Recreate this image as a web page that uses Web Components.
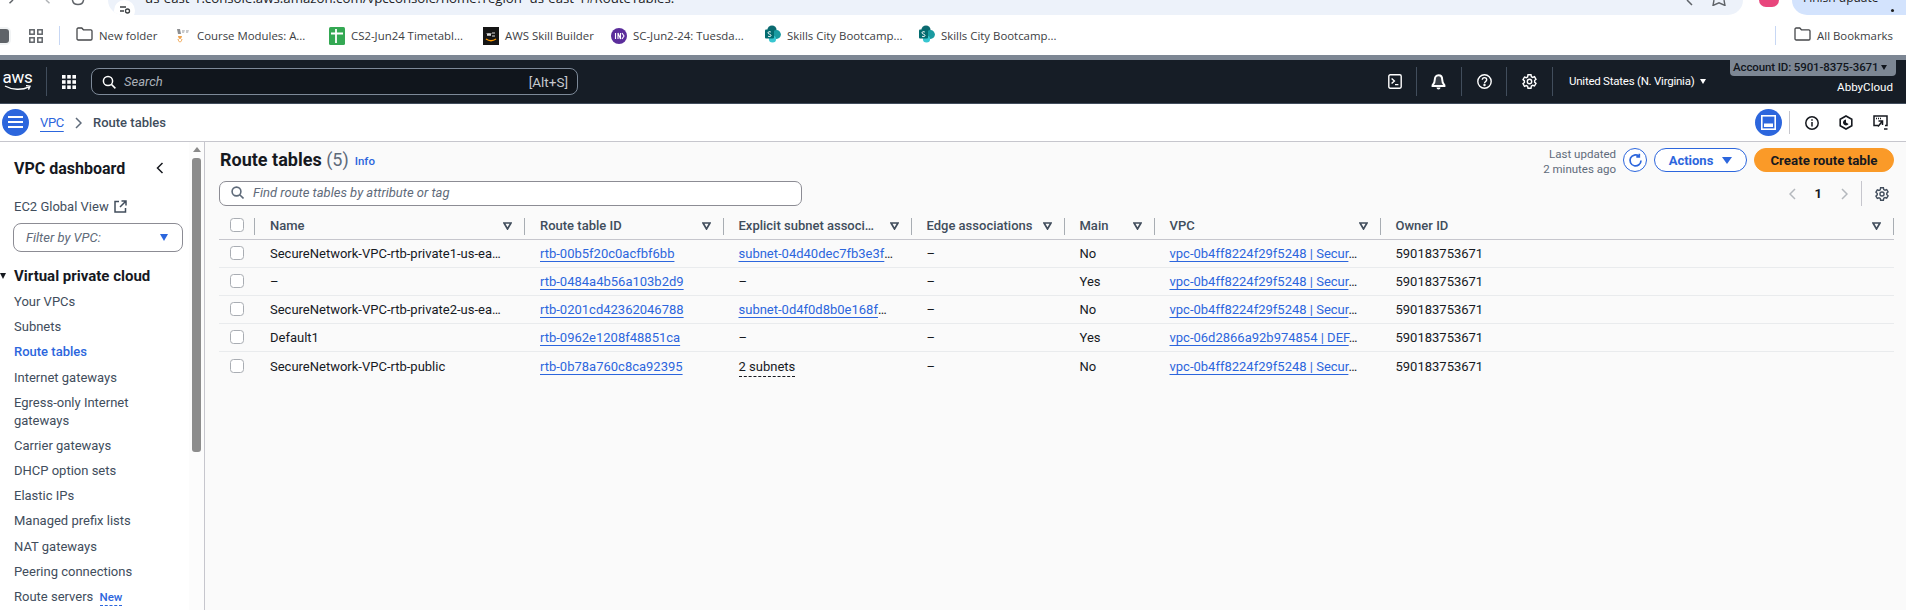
<!DOCTYPE html>
<html lang="en"><head><meta charset="utf-8"><title>Route tables</title>
<style>
html,body{margin:0;padding:0;height:610px;overflow:hidden;background:#fff}
body{font-family:Roboto,"Noto Sans",sans-serif;font-size:13px;color:#16191f;--link:#2c66dd;--cols:36px 270px 198.5px 188px 153px 90px 226px 1fr}
</style></head><body>
<browser-top></browser-top>
<aws-header></aws-header>
<crumb-bar></crumb-bar>
<console-body>
  <side-nav slot="nav"></side-nav>
  <route-panel slot="main"></route-panel>
</console-body>
<script>
function def(name,html,extra){
  const tpl=document.createElement('template');tpl.innerHTML=html;
  customElements.define(name,class extends HTMLElement{
    constructor(){super();this.attachShadow({mode:'open'}).appendChild(tpl.content.cloneNode(true));}
    connectedCallback(){extra&&extra(this)}
  });
}
const folder='<svg width="17" height="14" viewBox="0 0 17 14" fill="none" stroke="#45474a" stroke-width="1.3"><path d="M1 2.2c0-.7.5-1.2 1.2-1.2h3.6l1.6 1.8h7.4c.7 0 1.2.5 1.2 1.2v7.8c0 .7-.5 1.2-1.2 1.2H2.2c-.7 0-1.2-.5-1.2-1.2z"/></svg>';
const sp='<svg width="16" height="18" viewBox="0 0 16 18"><circle cx="7" cy="5" r="4.6" fill="#0b6a70"/><circle cx="11.5" cy="9.5" r="4.4" fill="#1a9ba1"/><circle cx="7.5" cy="14" r="3.6" fill="#37c6d0"/><rect x="0" y="4.5" width="9" height="9" rx="1" fill="#036c70"/><path d="M3 11.2c1 .6 3 .6 3-.8 0-1.4-3-1-3-2.6 0-1.3 1.8-1.3 2.8-.8" fill="none" stroke="#fff" stroke-width="1"/></svg>';

def('book-mark',`<style>:host{display:flex;align-items:center;gap:6px;font:11.4px/16px "Open Sans",sans-serif;color:#3c4043;white-space:nowrap;flex:none}::slotted(*){display:block}</style><slot name="i"></slot><slot></slot>`);

def('browser-top',`<style>
:host{display:block;height:55px;background:#fff;overflow:hidden;font-family:"Open Sans",sans-serif}
.tools{height:15px;display:flex;align-items:flex-start;position:relative}
.nav{width:108px;flex:none;display:flex;padding-left:6px;box-sizing:border-box;align-items:flex-start}
.nav svg{display:block;flex:none}
.addr{width:1635px;flex:none;height:15px;background:#edf2fa;border-radius:0 0 16px 16px;display:flex;align-items:flex-end;overflow:hidden;box-sizing:border-box;padding:0 16px 0 6px}
.lock{width:21px;height:21px;border-radius:50%;background:#fff;flex:none;margin-right:10px;display:flex;align-items:center;justify-content:center;transform:translateY(6px)}
.url{font-size:13.25px;line-height:16px;color:#202124;padding-bottom:9px;white-space:nowrap;flex:1}
.end{display:flex;gap:15px;align-self:flex-start}
.end svg{display:block}
.pink{width:20px;height:7px;border-radius:0 0 10px 10px;background:#e8467c;margin-left:16px;flex:none}
.pill{margin-left:13px;flex:1;height:15px;border-radius:0 0 0 16px;background:#d3e3fd;font-size:12px;line-height:16px;display:flex;align-items:flex-end;padding-left:11px;overflow:hidden;color:#1f1f1f;white-space:nowrap}
.pill span{padding-bottom:9px}
.dots{width:3px;height:3px;border-radius:50%;background:#1f1f1f;margin:0 0 3px 12px;flex:none}
.bar{height:39px;margin-top:1px;display:flex;align-items:center;border-bottom:1px solid #d9dcdf}
.sq{width:9px;height:14px;background:#5f6368;border-radius:0 3px 3px 0;box-shadow:0 0 0 2px #f1f3f4;flex:none}
.apps{margin-left:20px;flex:none;display:block}
.sep{width:1px;height:19px;background:#c7d7f4;margin-left:16px;flex:none}
.marks{display:flex;flex:1;align-items:center;padding-left:16px}
.sep2{margin-left:0}
.last{margin-left:18px;margin-right:13px}
</style>
<div class="tools">
 <div class="nav">
  <svg width="12" height="6" viewBox="0 0 12 6" fill="none" stroke="#5f6368" stroke-width="1.5"><path d="M7 0 3.5 3.2"/></svg>
  <svg style="margin-left:24px" width="12" height="6" viewBox="0 0 12 6" fill="none" stroke="#b0b3b6" stroke-width="1.5"><path d="M4 0l3.5 3.2"/></svg>
  <svg style="margin-left:17px" width="14" height="6" viewBox="0 0 14 6" fill="none" stroke="#5f6368" stroke-width="1.5"><path d="M1.4 0c.6 2.8 2.8 4.6 5.6 4.6S12 2.8 12.6 0"/></svg>
 </div>
 <div class="addr">
  <div class="lock"><svg width="12" height="10" viewBox="0 0 12 10" fill="none" stroke="#3c4043" stroke-width="1.3"><path d="M1 1h6M1 5h4"/><circle cx="8.5" cy="5" r="2"/></svg></div>
  <div class="url">us-east-1.console.aws.amazon.com/vpcconsole/home?region=us-east-1#RouteTables:</div>
  <div class="end">
   <svg width="14" height="6" viewBox="0 0 14 6" fill="none" stroke="#5f6368" stroke-width="1.5"><path d="M5 0 10 5"/></svg>
   <svg width="16" height="6" viewBox="0 0 16 6" fill="none" stroke="#5f6368" stroke-width="1.4"><path d="M3 0 L2 5.5 L8 2.8 L14 5.5 L13 0"/></svg>
  </div>
 </div>
 <div class="pink"></div>
 <div class="pill"><span>Finish update</span><i class="dots"></i></div>
</div>
<div class="bar">
 <div class="sq"></div>
 <svg class="apps" width="14" height="14" viewBox="0 0 14 14" fill="none" stroke="#5f6368" stroke-width="1.5"><rect x=".8" y=".8" width="4.4" height="4.4"/><rect x="8.8" y=".8" width="4.4" height="4.4"/><rect x=".8" y="8.8" width="4.4" height="4.4"/><rect x="8.8" y="8.8" width="4.4" height="4.4"/></svg>
 <div class="sep"></div>
 <div class="marks">
  <book-mark style="width:99px"><span slot="i">${folder}</span>New folder</book-mark>
  <book-mark style="width:154px"><svg slot="i" width="16" height="16" viewBox="0 0 16 16"><path d="M2 1h3l1 5H3z" fill="#8d8f92"/><path d="M7 2h3l-1 3H7zM11 2h3l-1 3h-2z" fill="#c9cacc"/><path d="M3 8c.5 4 3.5 4 4 0z" fill="#f0a24a"/><path d="M3 11c1 4 3 4 4 0" fill="none" stroke="#f0a24a"/></svg>Course Modules: A...</book-mark>
  <book-mark style="width:154px"><svg slot="i" width="16" height="18" viewBox="0 0 16 18"><rect width="16" height="18" rx="1.5" fill="#34a853"/><path d="M2 6.500h12M7 2v14" stroke="#fff" stroke-width="1.800"/></svg>CS2-Jun24 Timetabl...</book-mark>
  <book-mark style="width:128px"><svg slot="i" width="16" height="18" viewBox="0 0 16 18"><rect width="16" height="18" fill="#151515"/><path d="M4 6l1 3 1-3 1 3 1-3M9 6h3M9 9h3" stroke="#ddd" fill="none"/><path d="M3 12c3 2 7 2 10 0" stroke="#f90" fill="none" stroke-width="1.5"/></svg>AWS Skill Builder</book-mark>
  <book-mark style="width:154px"><svg slot="i" width="16" height="16" viewBox="0 0 16 16"><circle cx="8" cy="8" r="8" fill="#5b2d9b"/><path d="M4.5 5v6M7 11V5l2.5 6V5M11 5l2 3-2 3" stroke="#fff" fill="none" stroke-width="1.1"/></svg>SC-Jun2-24: Tuesda...</book-mark>
  <book-mark style="width:154px"><span slot="i">${sp}</span>Skills City Bootcamp...</book-mark>
  <book-mark><span slot="i">${sp}</span>Skills City Bootcamp...</book-mark>
 </div>
 <div class="sep sep2"></div>
 <book-mark class="last"><span slot="i">${folder}</span>All Bookmarks</book-mark>
</div>`);

const vline='<i class="v"></i>';
def('aws-header',`<style>
:host{display:block;height:49px;box-sizing:border-box;background:#161d26;border-top:5px solid #7d8794;border-bottom:1px solid #414d5c;position:relative;color:#fff}
.row{height:43px;display:flex;align-items:center}
.logo{margin-left:3px;width:29px;flex:none;height:29px;display:flex;flex-direction:column;align-items:center}
.logo span{font:400 17px/17px Roboto,sans-serif;letter-spacing:-.2px;margin-top:2px}
.logo svg{display:block;margin-top:-1px}
.v{display:block;width:1px;height:29px;background:#414d5c;flex:none}
.search{margin-left:15px;width:487px;height:27px;box-sizing:border-box;border:1px solid #7d8998;border-radius:8px;background:#10151c;display:flex;align-items:center;padding:0 9px 0 10px;color:#c6c9ce;font-size:13.5px;flex:none}
.search em{margin-left:8px;flex:1;color:#aab0b8;font-size:13px}
.ico{flex:none;display:block}
.region{font-size:11.5px;letter-spacing:-.24px;margin-left:16px;display:flex;align-items:center;gap:6px;white-space:nowrap;margin-top:-1px}
.region i{width:0;height:0;border:3.5px solid transparent;border-top:5px solid #fff;border-bottom:0}
.acct{position:absolute;right:10px;top:-1px;height:17px;width:166px;box-sizing:border-box;background:#7d8794;border-radius:0 0 4px 4px;color:#10151c;font-size:11.5px;letter-spacing:-.12px;font-weight:500;line-height:17px;padding-left:3px;display:flex;align-items:center;gap:3px;white-space:nowrap}
.acct i{width:0;height:0;border:3.5px solid transparent;border-top:5px solid #10151c;border-bottom:0}
.user{position:absolute;right:13px;top:18px;font-size:11.6px;line-height:18px}
</style>
<div class="row">
 <div class="logo"><span>aws</span><svg width="28" height="6" viewBox="0 0 28 6" fill="none" stroke="#fff" stroke-width="1.4"><path d="M1 1c7 4 17 4.4 24 .8M22 .6l4 .6-1.6 3.4"/></svg></div>
 <span style="width:14px;flex:none"></span>${vline}
 <svg class="ico" style="margin-left:15px" width="14" height="14" viewBox="0 0 14 14" fill="#fff"><rect width="3.6" height="3.6"/><rect x="5.2" width="3.6" height="3.6"/><rect x="10.4" width="3.6" height="3.6"/><rect y="5.2" width="3.6" height="3.6"/><rect x="5.2" y="5.2" width="3.6" height="3.6"/><rect x="10.4" y="5.2" width="3.6" height="3.6"/><rect y="10.4" width="3.6" height="3.6"/><rect x="5.2" y="10.4" width="3.6" height="3.6"/><rect x="10.4" y="10.4" width="3.6" height="3.6"/></svg>
 <div class="search">
  <svg class="ico" width="14" height="14" viewBox="0 0 14 14" fill="none" stroke="#fff" stroke-width="1.5"><circle cx="6" cy="6" r="4.6"/><path d="M9.4 9.4 13.4 13.4"/></svg>
  <em>Search</em><span>[Alt+S]</span>
 </div>
 <span style="width:810px;flex:none"></span>
 <svg class="ico" width="14" height="15" viewBox="0 0 14 15" fill="none" stroke="#fff" stroke-width="1.4"><rect x=".8" y=".8" width="12.4" height="13.4" rx="1.4"/><path d="M3.6 4.4 6.4 7 3.6 9.6M7 10.6h3.4"/></svg>
 <span style="width:14px;flex:none"></span>${vline}
 <svg class="ico" style="margin-left:14px" width="15" height="16" viewBox="0 0 15 16" fill="#fff"><path d="M7.5 1.200c-2.500 0-3.700 2-3.700 4.400 0 3-1.100 4.600-2.200 5.600v.8h11.800v-.8c-1.100-1-2.200-2.600-2.200-5.600 0-2.400-1.200-4.400-3.700-4.400z" fill="#fff" fill-opacity=".15" stroke="#fff" stroke-width="2"/><path d="M5.500 13.500a2 2 0 0 0 4 0z"/></svg>
 <span style="width:15px;flex:none"></span>${vline}
 <svg class="ico" style="margin-left:15px" width="15" height="15" viewBox="0 0 15 15" fill="none" stroke="#fff" stroke-width="1.400"><circle cx="7.500" cy="7.500" r="6.700"/><path d="M5.300 5.800c0-2.900 4.400-2.900 4.400-.1 0 1.700-2.200 1.800-2.200 3.500"/><circle cx="7.500" cy="11" r=".5" fill="#fff"/></svg>
 <span style="width:14px;flex:none"></span>${vline}
 <svg class="ico" style="margin-left:15px" width="15" height="15" viewBox="0 0 15 15" fill="none" stroke="#fff" stroke-width="1.400"><path d="M6 .8h3l.4 1.900 1.300.7 1.800-.7 1.500 2.600-1.400 1.300v1.500l1.400 1.300-1.500 2.600-1.800-.7-1.300.7L9 14.200H6l-.4-1.900-1.300-.7-1.800.7L1 9.700l1.400-1.300V6.900L1 5.600l1.500-2.600 1.800.7 1.300-.7z"/><circle cx="7.500" cy="7.500" r="2.200"/></svg>
 <span style="width:15px;flex:none"></span>${vline}
 <div class="region">United States (N. Virginia)<i></i></div>
</div>
<div class="acct">Account ID: 5901-8375-3671<i></i></div>
<div class="user">AbbyCloud</div>`);

def('crumb-bar',`<style>
:host{display:block;height:38px;box-sizing:border-box;border-bottom:1px solid #c6c6cd;background:#fff;color:#414d5c}
.row{height:37px;display:flex;align-items:center;padding-left:2px;padding-right:18px}
.circ{width:27px;height:27px;border-radius:50%;background:#2c66dd;display:flex;align-items:center;justify-content:center;flex:none;margin-top:-1px}
.link{margin-left:11px;width:23px;color:#2c66dd;text-decoration:underline;text-underline-offset:4px;font-size:13px;letter-spacing:-.4px}
.chev{margin-left:12px;display:block}
b{margin-left:11px;font-weight:500;font-size:13px}
.sp{flex:1}
.v{width:1px;height:23px;background:#c6c6cd;margin:0 15px 0 7px;flex:none}
svg{flex:none;display:block}
</style>
<div class="row">
 <div class="circ"><svg width="15" height="12" viewBox="0 0 15 12" stroke="#fff" stroke-width="1.800"><path d="M0 1h15M0 6h15M0 11h15"/></svg></div>
 <span class="link">VPC</span>
 <svg class="chev" width="7" height="12" viewBox="0 0 7 12" fill="none" stroke="#5f6b7a" stroke-width="1.500"><path d="M1 1l5 5-5 5"/></svg>
 <b>Route tables</b>
 <span class="sp"></span>
 <div class="circ"><svg width="15" height="15" viewBox="0 0 15 15" fill="none" stroke="#fff" stroke-width="1.600"><rect x=".8" y=".8" width="13.400" height="13.400"/><rect x="3" y="8.500" width="9" height="3.500" fill="#fff" stroke="none"/></svg></div>
 <i class="v"></i>
 <svg width="14" height="14" viewBox="0 0 14 14" fill="none" stroke="#16191f" stroke-width="1.500"><circle cx="7" cy="7" r="6.200"/><path d="M7 6v4.500M7 3.200v1.600"/></svg>
 <svg style="margin-left:20px" width="14" height="15" viewBox="0 0 14 15" fill="none" stroke="#16191f" stroke-width="1.600"><path d="M7 1l5.800 3.300v6.400L7 14l-5.800-3.300V4.300z"/><path d="M7 4.500a3 3 0 1 0 2.600 4.500L7 7.500z" fill="#16191f" stroke="none"/></svg>
 <svg style="margin-left:20px" width="15" height="15" viewBox="0 0 15 15" fill="none" stroke="#16191f" stroke-width="1.500"><path d="M5 10.500H1V1h13v9.500h-2"/><path d="M3 3.500h1M5 3.500h1M7 3.500h1" /><path d="M5.500 6h4v4M9.500 6l-4.500 5.500" /><path d="M11 14h3.500" /></svg>
</div>`);

def('console-body',`<style>:host{display:flex;height:468px;overflow:hidden;background:#fff}
.n{width:189px;flex:none;overflow:hidden}
.sb{width:15px;flex:none;background:#fcfcfc;display:flex;flex-direction:column;align-items:center;padding-top:5px;box-sizing:border-box}
.up{width:0;height:0;border:4.500px solid transparent;border-bottom:5.500px solid #8a8a8a;border-top:0}
.th{width:9px;height:294px;border-radius:3px;background:#8c8c8c;margin-top:6px;margin-left:-1px}
.m{flex:1;min-width:0;border-left:1px solid #c6c6cd;background:#fafafa}
</style><div class="n"><slot name="nav"></slot></div><div class="sb"><i class="up"></i><i class="th"></i></div><div class="m"><slot name="main"></slot></div>`);

def('nav-item',`<style>:host{display:block;font-size:13px;line-height:18px;color:#414d5c;padding:3.500px 0;width:150px}
:host([active]){color:#2c66dd;font-weight:500}
</style><slot></slot>`);

def('side-nav',`<style>
:host{display:block;padding:16px 0 0 14px;box-sizing:border-box;height:468px;color:#16191f}
.head{display:flex;align-items:center;justify-content:space-between;width:152px;height:20px}
.head b{font-size:16px;font-weight:700}
.ec2{margin-top:19px;display:flex;align-items:center;gap:5px;color:#414d5c;height:18px}
.filter{margin-top:8px;margin-left:-1px;width:170px;height:29px;box-sizing:border-box;border:1px solid #8c8c94;border-radius:8px;display:flex;align-items:center;justify-content:space-between;padding:0 14px 0 12px;font-style:italic;color:#5f6b7a;background:#fff}
.filter i{width:0;height:0;border:4.500px solid transparent;border-top:7px solid #2c66dd;border-bottom:0}
.sec{margin-top:14px;height:20px;display:flex;align-items:center;font-size:15px;font-weight:700;position:relative}
.tri{position:absolute;left:-14px;top:7px;width:0;height:0;border:3.500px solid transparent;border-top:6px solid #16191f;border-bottom:0}
.list{margin-top:3px}
.new{color:#2c66dd;font-size:11.500px;font-weight:500;margin-left:3px;border-bottom:1px dashed #2c66dd;padding-bottom:1px}
nav-item.gap{margin-top:1px}
</style>
<div class="head"><b>VPC dashboard</b><svg width="8" height="12" viewBox="0 0 8 12" fill="none" stroke="#16191f" stroke-width="1.500" style="margin-right:2px"><path d="M6.500 1l-5 5 5 5"/></svg></div>
<div class="ec2">EC2 Global View <svg width="13" height="13" viewBox="0 0 13 13" fill="none" stroke="#414d5c" stroke-width="1.500"><path d="M5 1.500H1v10.500h10.500V8M7.500 1h4.500v4.500M12 1 6 7"/></svg></div>
<div class="filter"><span>Filter by VPC:</span><i></i></div>
<div class="sec"><i class="tri"></i>Virtual private cloud</div>
<div class="list">
 <nav-item>Your VPCs</nav-item><nav-item>Subnets</nav-item><nav-item active>Route tables</nav-item>
 <nav-item class="gap">Internet gateways</nav-item><nav-item>Egress-only Internet gateways</nav-item><nav-item>Carrier gateways</nav-item><nav-item>DHCP option sets</nav-item><nav-item>Elastic IPs</nav-item><nav-item>Managed prefix lists</nav-item><nav-item class="gap">NAT gateways</nav-item><nav-item>Peering connections</nav-item><nav-item>Route servers <span class="new">New</span></nav-item>
</div>`);

def('rt-link',`<style>:host{color:var(--link);text-decoration:underline;text-underline-offset:3px}</style><slot></slot>`);
def('rt-check',`<style>:host{display:block;width:14px;height:14px;box-sizing:border-box;border:1.500px solid #a9adb3;border-radius:3.500px;background:#fff;margin-left:11px}</style>`);
def('rt-head',`<style>:host{display:flex;align-items:center;height:17px;position:relative;font-weight:500;color:#414d5c;padding:0 13px 0 15px;white-space:nowrap;box-sizing:border-box}
:host::after{content:"";position:absolute;right:0;top:1px;height:17px;width:1px;background:#a8adb3}
span{flex:1}svg{display:block;flex:none}
</style><span><slot></slot></span><svg width="9" height="8" viewBox="0 0 9 8" fill="none" stroke="#414d5c" stroke-width="1.700"><path d="M1 1h7L4.500 7z"/></svg>`);
def('rt-chk',`<style>:host{display:flex;align-items:center;height:18px;position:relative;box-sizing:border-box;margin-top:-1px}
:host(.h)::after{content:"";position:absolute;right:0;top:2px;height:17px;width:1px;background:#a8adb3}</style><rt-check></rt-check>`);
def('rt-row',`<style>:host{display:grid;grid-template-columns:var(--cols);height:28px;box-sizing:border-box;border-bottom:1px solid #e9ebed;align-items:center;white-space:nowrap}
:host(.hd){height:23px;border-bottom:1px solid #c6c6cd;align-items:start}
</style><slot></slot>`);
def('rt-cell',`<style>:host{display:block;padding-left:15px;color:#16191f}</style><slot></slot>`);
def('rt-action',`<style>:host{display:flex;align-items:center;justify-content:center;height:24px;box-sizing:border-box;border-radius:13px;border:1.500px solid #2c66dd;color:#2c66dd;font-weight:700;background:#fff;white-space:nowrap;gap:9px;font-size:13px}
:host(.p){background:#fa9a28;border-color:#fa9a28;color:#16191f;font-size:13.300px}
</style><slot></slot>`);

def('route-panel',`<style>
:host{display:block;padding:6px 12px 0 14px;height:468px;box-sizing:border-box;background:#fafafa}
.top{display:flex;align-items:flex-start;height:24px}
h1{font-size:18px;line-height:24px;font-weight:700;margin:0 0 0 1px;color:#16191f;white-space:nowrap}
h1 span{font-weight:400;color:#5f6b7a}
.info{font-size:11.500px;font-weight:500;color:#2c66dd;margin-left:6px;line-height:24px;margin-top:1px}
.sp{flex:1}
.upd{font-size:11.500px;line-height:15px;color:#5f6b7a;text-align:right;margin:-1px 7px 0 0;white-space:nowrap}
.a1{width:93px;margin-left:7px}.a2{width:140px;margin-left:7px}
.a1 i{width:0;height:0;border:5px solid transparent;border-top:7px solid #2c66dd;border-bottom:0}
.refresh{width:24px;height:24px;box-sizing:border-box;border:1.500px solid #2c66dd;border-radius:50%;background:#fff;display:flex;align-items:center;justify-content:center;flex:none}
.second{display:flex;align-items:center;margin-top:9px;height:25px;margin-bottom:11px}
.find{width:583px;height:25px;box-sizing:border-box;border:1px solid #8c8c94;border-radius:7px;background:#fff;display:flex;align-items:center;padding:0 0 2px 11px;gap:9px;font-style:italic;color:#5f6b7a;flex:none}
.pg{display:flex;align-items:center;color:#16191f;font-weight:700;margin-right:5px}
.pg .v{width:1px;height:25px;background:#c6c6cd;margin:0 13px}
svg{display:block;flex:none}
</style>
<div class="top">
 <h1>Route tables <span>(5)</span></h1><span class="info">Info</span><span class="sp"></span>
 <div class="upd">Last updated<br>2 minutes ago</div>
 <div class="refresh"><svg width="15" height="15" viewBox="0 0 15 15" fill="none" stroke="#2c66dd" stroke-width="1.700"><path d="M13 7.500a5.500 5.500 0 1 1-2-4.300"/><path d="M11.300 .8v3h-3"/></svg></div>
 <rt-action class="a1">Actions<i></i></rt-action>
 <rt-action class="a2 p">Create route table</rt-action>
</div>
<div class="second">
 <div class="find"><svg width="13" height="13" viewBox="0 0 13 13" fill="none" stroke="#5f6b7a" stroke-width="1.600"><circle cx="5.500" cy="5.500" r="4.400"/><path d="M8.700 8.700 12.500 12.500"/></svg><span>Find route tables by attribute or tag</span></div>
 <span class="sp"></span>
 <div class="pg">
  <svg width="7" height="12" viewBox="0 0 7 12" fill="none" stroke="#b4b8bd" stroke-width="1.500"><path d="M6 1 1 6l5 5"/></svg>
  <span style="margin:0 19px">1</span>
  <svg width="7" height="12" viewBox="0 0 7 12" fill="none" stroke="#b4b8bd" stroke-width="1.500"><path d="M1 1l5 5-5 5"/></svg>
  <i class="v"></i>
  <svg width="14" height="14" viewBox="0 0 15 15" fill="none" stroke="#414d5c" stroke-width="1.500"><path d="M6 .8h3l.4 1.900 1.300.7 1.800-.7 1.500 2.600-1.400 1.300v1.500l1.400 1.300-1.500 2.600-1.800-.7-1.300.7L9 14.200H6l-.4-1.900-1.300-.7-1.800.7L1 9.700l1.400-1.300V6.900L1 5.600l1.500-2.600 1.800.7 1.300-.7z"/><circle cx="7.500" cy="7.500" r="2.200"/></svg>
 </div>
</div>
<rt-row class="hd"><rt-chk class="h"></rt-chk><rt-head>Name</rt-head><rt-head>Route table ID</rt-head><rt-head>Explicit subnet associ…</rt-head><rt-head>Edge associations</rt-head><rt-head>Main</rt-head><rt-head>VPC</rt-head><rt-head>Owner ID</rt-head></rt-row>
<rt-row><rt-chk></rt-chk><rt-cell>SecureNetwork-VPC-rtb-private1-us-ea…</rt-cell><rt-cell><rt-link>rtb-00b5f20c0acfbf6bb</rt-link></rt-cell><rt-cell><rt-link>subnet-04d40dec7fb3e3f</rt-link>…</rt-cell><rt-cell>–</rt-cell><rt-cell>No</rt-cell><rt-cell><rt-link>vpc-0b4ff8224f29f5248 | Secur</rt-link>…</rt-cell><rt-cell>590183753671</rt-cell></rt-row>
<rt-row><rt-chk></rt-chk><rt-cell>–</rt-cell><rt-cell><rt-link>rtb-0484a4b56a103b2d9</rt-link></rt-cell><rt-cell>–</rt-cell><rt-cell>–</rt-cell><rt-cell>Yes</rt-cell><rt-cell><rt-link>vpc-0b4ff8224f29f5248 | Secur</rt-link>…</rt-cell><rt-cell>590183753671</rt-cell></rt-row>
<rt-row><rt-chk></rt-chk><rt-cell>SecureNetwork-VPC-rtb-private2-us-ea…</rt-cell><rt-cell><rt-link>rtb-0201cd42362046788</rt-link></rt-cell><rt-cell><rt-link>subnet-0d4f0d8b0e168f</rt-link>…</rt-cell><rt-cell>–</rt-cell><rt-cell>No</rt-cell><rt-cell><rt-link>vpc-0b4ff8224f29f5248 | Secur</rt-link>…</rt-cell><rt-cell>590183753671</rt-cell></rt-row>
<rt-row><rt-chk></rt-chk><rt-cell>Default1</rt-cell><rt-cell><rt-link>rtb-0962e1208f48851ca</rt-link></rt-cell><rt-cell>–</rt-cell><rt-cell>–</rt-cell><rt-cell>Yes</rt-cell><rt-cell><rt-link>vpc-06d2866a92b974854 | DEF</rt-link>…</rt-cell><rt-cell>590183753671</rt-cell></rt-row>
<rt-row style="border-bottom:0"><rt-chk></rt-chk><rt-cell>SecureNetwork-VPC-rtb-public</rt-cell><rt-cell><rt-link>rtb-0b78a760c8ca92395</rt-link></rt-cell><rt-cell><span style="border-bottom:1px dashed #16191f;padding-bottom:2px">2 subnets</span></rt-cell><rt-cell>–</rt-cell><rt-cell>No</rt-cell><rt-cell><rt-link>vpc-0b4ff8224f29f5248 | Secur</rt-link>…</rt-cell><rt-cell>590183753671</rt-cell></rt-row>`);
</script>
</body></html>
